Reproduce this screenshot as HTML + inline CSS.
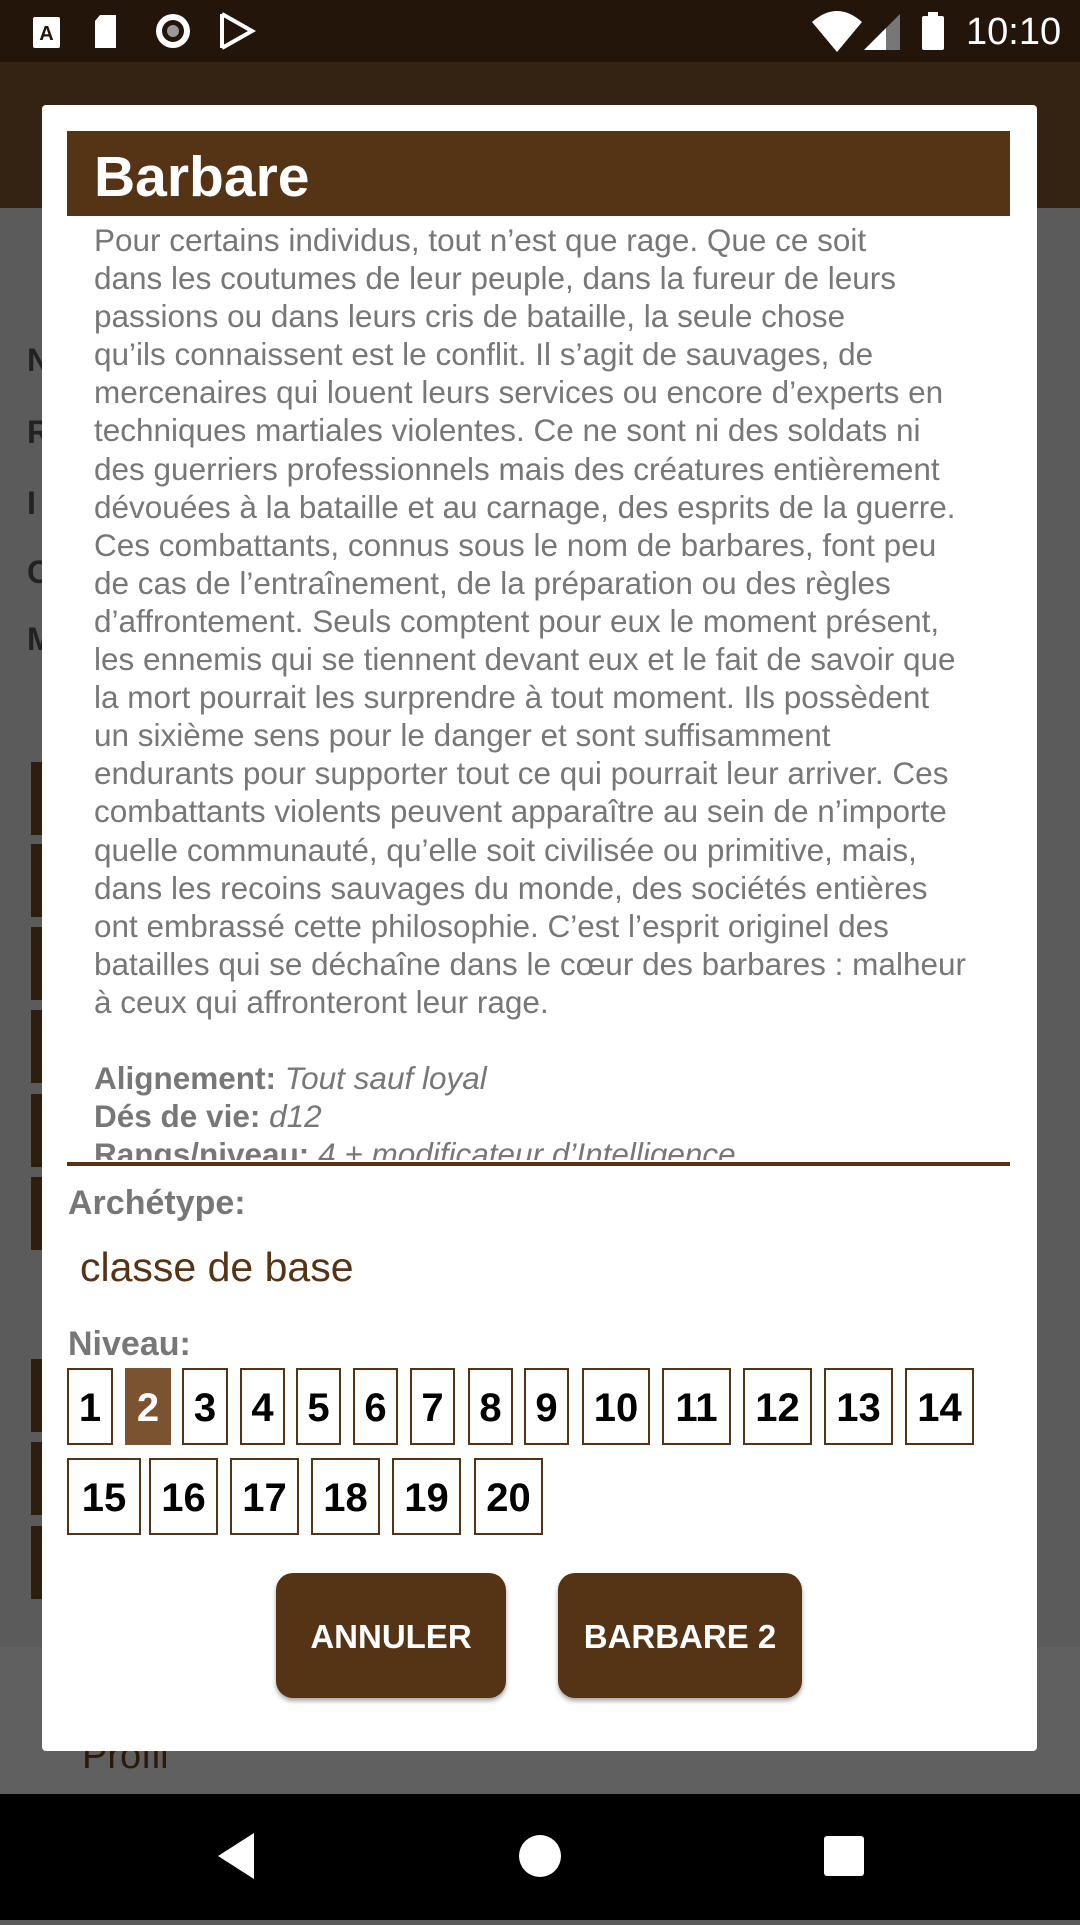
<!DOCTYPE html>
<html><head><meta charset="utf-8"><style>
*{margin:0;padding:0;box-sizing:border-box}
body{width:1080px;height:1920px;overflow:hidden;background:#5b5b5b;font-family:"Liberation Sans",sans-serif;position:relative}
.abs{position:absolute}
#sb{left:0;top:0;width:1080px;height:62px;background:#231509}
#ab{left:0;top:62px;width:1080px;height:146px;background:#342212}
#nav{left:0;top:1794px;width:1080px;height:126px;background:#000}
.strip{position:absolute;left:31px;width:14px;height:73px;background:#2e1e0e}
.bl{position:absolute;left:27px;font-weight:bold;font-size:32px;color:#222}
#dlg{left:42px;top:105px;width:995px;height:1646px;background:#fff;border-radius:4px}
#title{left:67px;top:131px;width:943px;height:85px;background:#553315;color:#fff;font-weight:bold;font-size:57px;padding-left:27px;line-height:92px}
#body{left:94px;top:221px;width:920px;height:939px;overflow:hidden;color:#777;font-size:31.5px;line-height:38.1px}
#body div{white-space:nowrap}
#div{left:67px;top:1162px;width:943px;height:4px;background:#553315}
.lab{position:absolute;left:68px;font-weight:bold;font-size:34px;color:#777}
.box{position:absolute;height:77px;border:2.5px solid #553315;font-weight:bold;font-size:40px;color:#000;text-align:center;line-height:76px}
.btn{position:absolute;top:1573px;height:125px;background:#553315;border-radius:17px;color:#fff;font-size:33px;font-weight:bold;text-align:center;line-height:127px;box-shadow:0 3px 5px rgba(0,0,0,.35)}
</style></head><body>
<div id="sb" class="abs">
<svg width="1080" height="62" style="position:absolute;left:0;top:0">
<rect x="33" y="17" width="27" height="31" rx="2" fill="#fff"/><text x="46.5" y="40" font-size="20" font-weight="bold" text-anchor="middle" fill="#231509" font-family="Liberation Sans">A</text>
<path d="M100 15h16v33h-21v-27z" fill="#fff"/>
<circle cx="173" cy="31" r="17" fill="#fff"/><circle cx="173" cy="31" r="11" fill="#231509"/><circle cx="173" cy="31" r="6" fill="#999"/>
<path d="M222 14l30 17-30 17M222 14v34" fill="none" stroke="#fff" stroke-width="4"/>
<path d="M812 22q25-22 50 0l-25 30z" fill="#fff"/>
<path d="M864 50l36-36v36z" fill="#777"/><path d="M864 50l22-22v22z" fill="#fff"/>
<rect x="922" y="16" width="22" height="34" rx="2" fill="#fff"/><rect x="928" y="12" width="10" height="5" fill="#fff"/>
<text x="966" y="44" font-size="38" fill="#fff" font-family="Liberation Sans">10:10</text>
</svg></div>
<div id="ab" class="abs"></div>
<div class="bl" style="top:342px">N</div><div class="bl" style="top:414px">R</div><div class="bl" style="top:485px">I</div><div class="bl" style="top:554px">C</div><div class="bl" style="top:621px">M</div>
<div class="strip" style="top:762px"></div><div class="strip" style="top:844px"></div><div class="strip" style="top:927px"></div><div class="strip" style="top:1010px"></div><div class="strip" style="top:1094px"></div><div class="strip" style="top:1177px"></div><div class="strip" style="top:1359px"></div><div class="strip" style="top:1442px"></div><div class="strip" style="top:1526px"></div>
<div class="abs" style="left:0;top:1647px;width:1080px;height:147px;background:#606060"></div>
<div class="abs" style="left:82px;top:1735px;font-size:38px;color:#2a1a0a">Profil</div>
<div id="nav" class="abs"><svg width="1080" height="126">
<path d="M254 39v46l-36-23z" fill="#fff"/><circle cx="540" cy="62" r="21" fill="#fff"/><rect x="824" y="42" width="40" height="40" rx="3" fill="#fff"/></svg></div>
<div id="dlg" class="abs"></div>
<div id="title" class="abs">Barbare</div>
<div id="body" class="abs">
<div>Pour certains individus, tout n’est que rage. Que ce soit</div>
<div>dans les coutumes de leur peuple, dans la fureur de leurs</div>
<div>passions ou dans leurs cris de bataille, la seule chose</div>
<div>qu’ils connaissent est le conflit. Il s’agit de sauvages, de</div>
<div>mercenaires qui louent leurs services ou encore d’experts en</div>
<div>techniques martiales violentes. Ce ne sont ni des soldats ni</div>
<div>des guerriers professionnels mais des créatures entièrement</div>
<div>dévouées à la bataille et au carnage, des esprits de la guerre.</div>
<div>Ces combattants, connus sous le nom de barbares, font peu</div>
<div>de cas de l’entraînement, de la préparation ou des règles</div>
<div>d’affrontement. Seuls comptent pour eux le moment présent,</div>
<div>les ennemis qui se tiennent devant eux et le fait de savoir que</div>
<div>la mort pourrait les surprendre à tout moment. Ils possèdent</div>
<div>un sixième sens pour le danger et sont suffisamment</div>
<div>endurants pour supporter tout ce qui pourrait leur arriver. Ces</div>
<div>combattants violents peuvent apparaître au sein de n’importe</div>
<div>quelle communauté, qu’elle soit civilisée ou primitive, mais,</div>
<div>dans les recoins sauvages du monde, des sociétés entières</div>
<div>ont embrassé cette philosophie. C’est l’esprit originel des</div>
<div>batailles qui se déchaîne dans le cœur des barbares : malheur</div>
<div>à ceux qui affronteront leur rage.</div>
<div>&nbsp;</div>
<div><b>Alignement:</b> <i>Tout sauf loyal</i></div>
<div><b>Dés de vie:</b> <i>d12</i></div>
<div><b>Rangs/niveau:</b> <i>4 + modificateur d’Intelligence</i></div>
</div>
<div id="div" class="abs"></div>
<div class="lab" style="top:1184px">Archétype:</div>
<div class="abs" style="left:80px;top:1244px;font-size:41px;color:#553315">classe de base</div>
<div class="lab" style="top:1325px">Niveau:</div>
<div class="box" style="left:67px;top:1368px;width:46px">1</div>
<div class="box" style="left:125px;top:1368px;width:46px;background:#7b5330;color:#fff;border-color:#7b5330">2</div>
<div class="box" style="left:182px;top:1368px;width:46px">3</div>
<div class="box" style="left:240px;top:1368px;width:45px">4</div>
<div class="box" style="left:296px;top:1368px;width:45px">5</div>
<div class="box" style="left:353px;top:1368px;width:45px">6</div>
<div class="box" style="left:410px;top:1368px;width:45px">7</div>
<div class="box" style="left:468px;top:1368px;width:45px">8</div>
<div class="box" style="left:524px;top:1368px;width:45px">9</div>
<div class="box" style="left:582px;top:1368px;width:68px">10</div>
<div class="box" style="left:662px;top:1368px;width:69px">11</div>
<div class="box" style="left:743px;top:1368px;width:69px">12</div>
<div class="box" style="left:824px;top:1368px;width:69px">13</div>
<div class="box" style="left:905px;top:1368px;width:69px">14</div>
<div class="box" style="left:67px;top:1458px;width:74px">15</div>
<div class="box" style="left:149px;top:1458px;width:69px">16</div>
<div class="box" style="left:230px;top:1458px;width:69px">17</div>
<div class="box" style="left:311px;top:1458px;width:69px">18</div>
<div class="box" style="left:392px;top:1458px;width:69px">19</div>
<div class="box" style="left:474px;top:1458px;width:69px">20</div>
<div class="btn" style="left:276px;width:230px">ANNULER</div>
<div class="btn" style="left:558px;width:244px">BARBARE 2</div>
</body></html>
